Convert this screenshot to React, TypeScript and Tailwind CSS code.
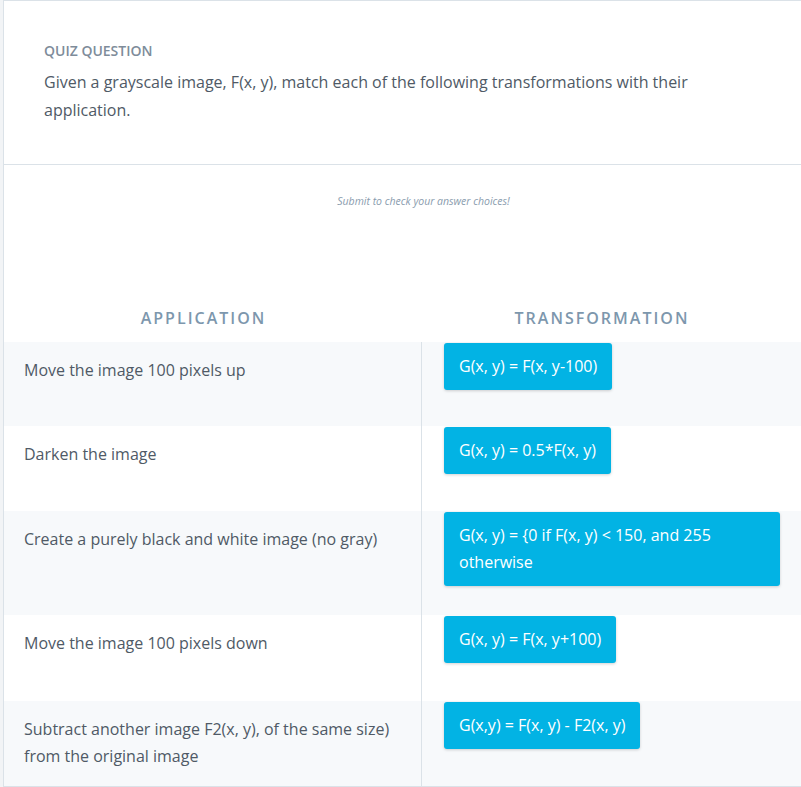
const rows = [
  { app: 'Move the image 100 pixels up', formula: 'G(x, y) = F(x, y-100)', h: 'h-[84px]', alt: true },
  { app: 'Darken the image', formula: 'G(x, y) = 0.5*F(x, y)', h: 'h-[85px]', alt: false },
  {
    app: 'Create a purely black and white image (no gray)',
    formula: 'G(x, y) = {0 if F(x, y) < 150, and 255 otherwise',
    h: 'h-[104px]',
    alt: true,
  },
  { app: 'Move the image 100 pixels down', formula: 'G(x, y) = F(x, y+100)', h: 'h-[86px]', alt: false },
  {
    app: 'Subtract another image F2(x, y), of the same size) from the original image',
    formula: 'G(x,y) = F(x, y) - F2(x, y)',
    h: 'h-[85px]',
    alt: true,
  },
];

export default function App() {
  return (
    <div className="min-h-screen bg-[#f2f4f6] pl-[3px] overflow-hidden" style={{ fontFamily: '"Open Sans", sans-serif' }}>
      <div className="w-[820px] bg-white border-l border-t border-b border-[#dbe2e8]">
        {/* question header */}
        <div className="px-10 pt-10 pb-10 border-b border-[#dbe2e8]">
          <div className="text-[14px] leading-5 font-semibold uppercase text-[#7e8c9a] mb-[7px]">Quiz Question</div>
          <p className="w-[680px] text-[16px] leading-7 text-[#4f5a66]">
            Given a grayscale image, F(x, y), match each of the following transformations with their application.
          </p>
        </div>

        {/* matching area */}
        <div className="w-[797px] h-[177px] pt-[29px] pb-3 flex flex-col">
          <div className="pl-[42px] text-center text-[10.5px] leading-[14px] italic text-[#8a9cae]">
            Submit to check your answer choices!
          </div>
          <div className="mt-auto flex text-[16px] leading-6 font-semibold tracking-[2px] uppercase text-[#7d97ad]">
            <div className="w-[418px] text-center pr-[19px]">Application</div>
            <div className="flex-1 text-center pr-[19px]">Transformation</div>
          </div>
        </div>

        <div className="w-[797px]">
          {rows.map((r) => (
            <div key={r.app} className={`flex ${r.h} ${r.alt ? 'bg-[#f7f9fb]' : 'bg-white'}`}>
              <div className="w-[418px] shrink-0 border-r border-[#dbe2e8] pl-5 pr-5 pt-[15px] text-[16px] leading-[27px] text-[#4f5a66]">
                {r.app}
              </div>
              <div className="flex-1 pl-[22px] pt-[1px]">
                <div className="inline-block max-w-[336px] rounded-[3px] bg-[#02b3e4] px-[15px] py-[10px] text-[16px] leading-[27px] text-white shadow-[0_1px_3px_rgba(0,0,0,0.18)]">
                  {r.formula}
                </div>
              </div>
            </div>
          ))}
        </div>
      </div>
    </div>
  );
}
